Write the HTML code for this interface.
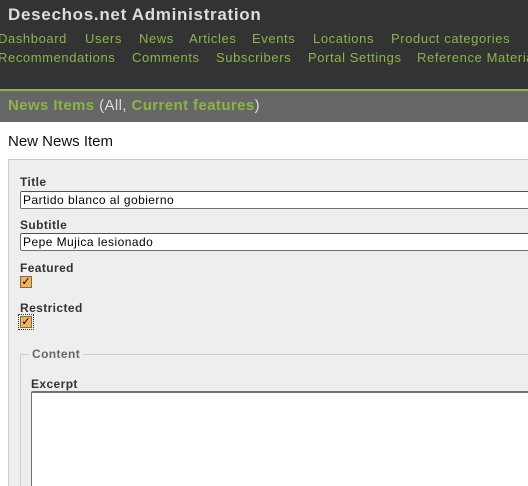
<!DOCTYPE html>
<html><head><style>
html,body{margin:0;width:528px;height:486px;overflow:hidden}
body{background:#fff;font-family:"Liberation Sans",sans-serif;position:relative}
.a{position:absolute;white-space:nowrap}
.n{color:#8bb548;font-size:13px;letter-spacing:0.6px}
.lbl{font-weight:bold;font-size:12px;color:#333;letter-spacing:0.4px}
.inp{position:absolute;left:20px;width:520px;height:16px;background:#fff;border:1px solid #7a6e66;border-top-color:#5a4e46;border-radius:2px;font-size:12px;line-height:16px;padding-left:2px;color:#000;letter-spacing:0.45px}
.cb{position:absolute;width:10px;height:10px;background:#f0b45c;border:1px solid #8a6a3a;font-size:11px;line-height:10px;color:#000;text-align:center}
</style></head><body>
<div class="a" style="left:0;top:0;width:528px;height:89px;background:#333"></div>
<div class="a" style="left:0;top:89px;width:528px;height:2px;background:#8bb548"></div>
<div class="a" style="left:0;top:91px;width:528px;height:31px;background:#666"></div>
<div class="a" style="left:8px;top:5px;font-size:17px;font-weight:bold;color:#ddd;letter-spacing:0.7px">Desechos.net Administration</div>
<div class="a n" style="left:-2px;top:31px">Dashboard</div>
<div class="a n" style="left:85px;top:31px">Users</div>
<div class="a n" style="left:139px;top:31px">News</div>
<div class="a n" style="left:189px;top:31px">Articles</div>
<div class="a n" style="left:252px;top:31px">Events</div>
<div class="a n" style="left:313px;top:31px">Locations</div>
<div class="a n" style="left:391px;top:31px">Product categories</div>
<div class="a n" style="left:-2px;top:50px">Recommendations</div>
<div class="a n" style="left:132px;top:50px">Comments</div>
<div class="a n" style="left:216px;top:50px">Subscribers</div>
<div class="a n" style="left:308px;top:50px">Portal Settings</div>
<div class="a n" style="left:417px;top:50px">Reference Materials</div>
<div class="a" style="left:8px;top:97px;font-size:15px;font-weight:bold;color:#8bb548;letter-spacing:0.4px">News Items <span style="color:#ddd;font-weight:normal">(All, </span>Current features<span style="color:#ddd;font-weight:normal">)</span></div>
<div class="a" style="left:8px;top:133px;font-size:15px;color:#111">New News Item</div>
<div class="a" style="left:8px;top:159px;width:530px;height:340px;background:#eee;border-left:1px solid #ccc;border-top:1px solid #ccc"></div>
<div class="a lbl" style="left:20px;top:175px">Title</div>
<div class="inp" style="top:191px">Partido blanco al gobierno</div>
<div class="a lbl" style="left:20px;top:218px">Subtitle</div>
<div class="inp" style="top:233px">Pepe Mujica lesionado</div>
<div class="a lbl" style="left:20px;top:261px">Featured</div>
<div class="cb" style="left:20px;top:276px">✓</div>
<div class="a lbl" style="left:20px;top:301px">Restricted</div>
<div class="a" style="left:18px;top:314px;width:14px;height:14px;border:1px dotted #333"></div>
<div class="cb" style="left:20px;top:316px">✓</div>
<div class="a" style="left:20px;top:354px;width:520px;height:140px;border-left:1px solid #ccc;border-top:1px solid #ccc"></div>
<div class="a lbl" style="left:29px;top:347px;background:#eee;padding:0 3px;color:#666">Content</div>
<div class="a lbl" style="left:31px;top:377px">Excerpt</div>
<div class="a" style="left:31px;top:391px;width:510px;height:110px;background:#fff;border:1px solid #7a6e66;border-top:2px solid #7a6e66;border-radius:2px"></div>
</body></html>
